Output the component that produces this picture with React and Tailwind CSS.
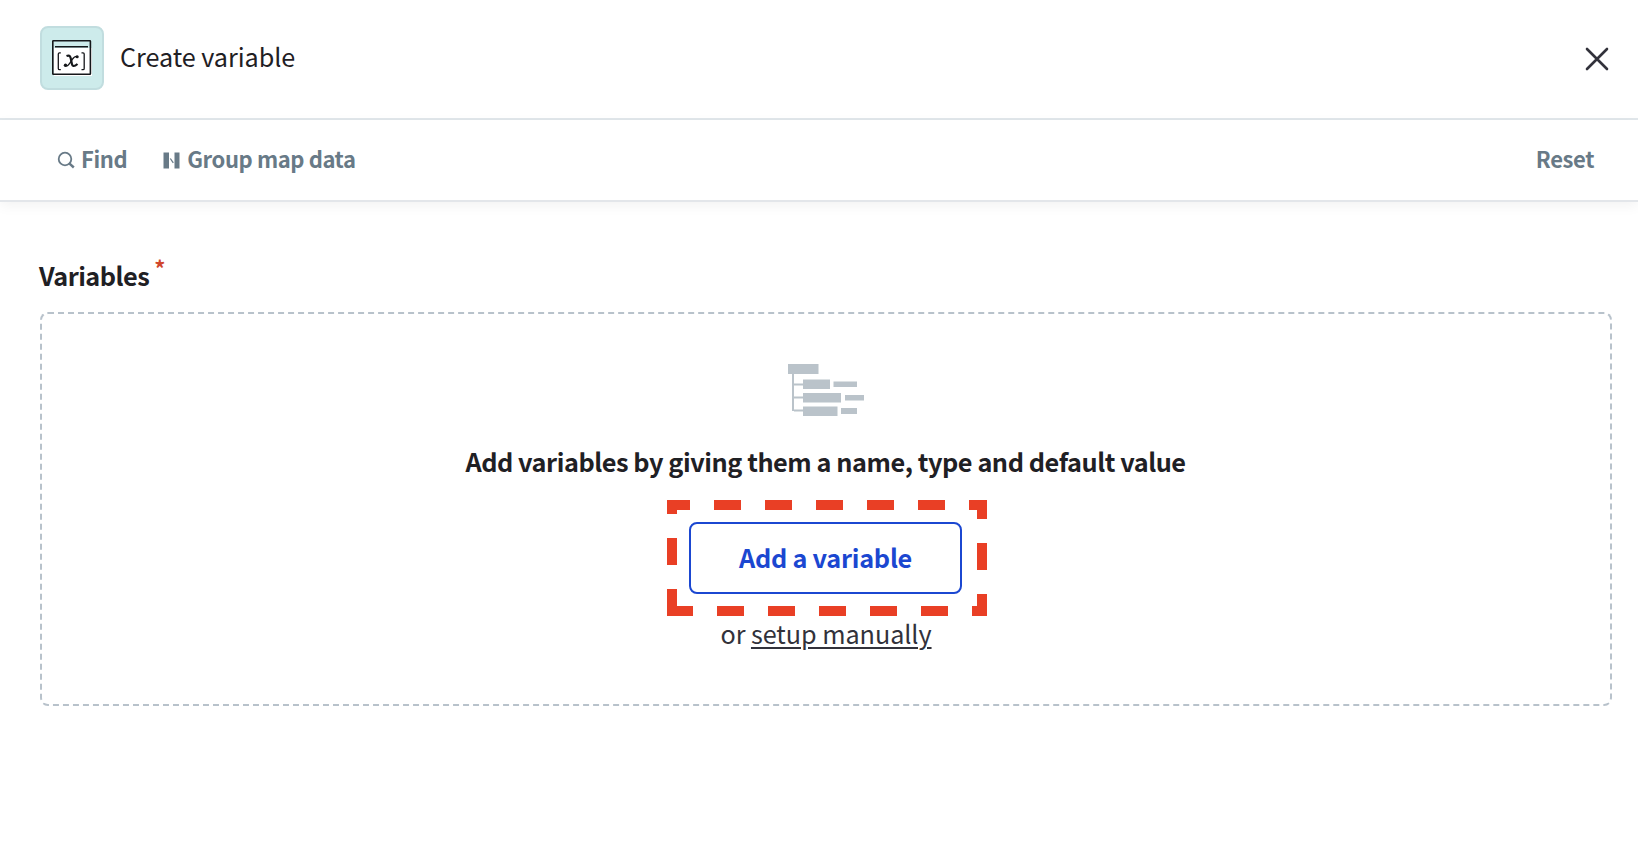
export default function App() {
  return (
    <div className="flex h-[858px] w-full flex-col overflow-hidden bg-white font-['Noto_Sans_CJK_SC',sans-serif] text-[#1f2024]">
      <header className="flex h-[120px] shrink-0 items-center justify-between border-b-2 border-[#e1e7eb] pr-7 pb-0.5 pl-10">
        <div className="flex items-center gap-4">
          <div className="flex size-16 items-center justify-center rounded-lg border-2 border-[#c1dddf] bg-[#cdebeb]">
            <svg className="-ml-px" width="40" height="36" viewBox="0 0 40 36" fill="none">
              <path d="M2 8H40V36H2Z" fill="#fff" />
              <rect x="0.8" y="0.8" width="37.6" height="33.4" rx="0.5" stroke="#15171a" strokeWidth="1.6" />
              <path d="M3 6.700H36" stroke="#15171a" strokeWidth="1.5" />
              <path d="M8.800 12.800H7.500Q6.300 12.800 6.300 14V28.500Q6.300 29.700 7.500 29.700H8.800M29.500 12.800H31Q32.200 12.800 32.200 14V28.500Q32.200 29.700 31 29.700H29.500" stroke="#15171a" strokeWidth="1.3" />
              <path d="M14.500 16C18 14.500 18.700 17 19.300 21C20 26.500 21.500 27.500 25.500 24" stroke="#15171a" strokeWidth="2.2" />
              <path d="M25.500 16.500C22 15.500 21 18.500 19.300 21C17 24.500 15.500 27 12.500 25.500" stroke="#15171a" strokeWidth="1.3" />
              <circle cx="25.200" cy="16.700" r="1.500" fill="#15171a" />
              <circle cx="13.500" cy="25.300" r="1.700" fill="#15171a" />
            </svg>
          </div>
          <h1 className="pb-1 text-[25.2px] leading-8 tracking-[-0.05px] whitespace-nowrap">Create variable</h1>
        </div>
        <svg className="mt-px" width="26" height="26" viewBox="0 0 26 26" stroke="#32323b" strokeWidth="2.6" strokeLinecap="round">
          <path d="M3 3L23 23M23 3L3 23" />
        </svg>
      </header>
      <nav className="flex h-[82px] shrink-0 items-center justify-between border-b-2 border-[#e3e6ea] pr-11 pl-[57px] text-[22px] font-bold tracking-[-0.4px] text-[#687a87] shadow-[0_4px_12px_rgba(0,0,0,0.05)]">
        <div className="flex items-center gap-9">
          <div className="flex items-center gap-1.5">
            <svg width="18" height="18" viewBox="0 0 18 18" fill="none" stroke="#687a87" strokeWidth="1.8">
              <circle cx="8" cy="8" r="6.300" />
              <path d="M12.300 12.300L16.800 16.500" strokeWidth="2.4" />
            </svg>
            <span className="pb-[3px]">Find</span>
          </div>
          <div className="flex items-center gap-[7px]">
            <svg width="17" height="17" viewBox="0 0 17 17" fill="#687a87">
              <path d="M0.500 0.500H6V16.500H0.500ZM11.500 0.500H16.500V16.500H11.500Z" />
              <path d="M7.300 6.500L10.300 10.800" stroke="#687a87" strokeWidth="1.3" />
            </svg>
            <span className="pb-[3px]">Group map data</span>
          </div>
        </div>
        <span className="pb-[3px]">Reset</span>
      </nav>
      <main className="pt-14 pr-[26px] pl-10">
        <div className="-ml-px flex h-[54px] items-start gap-[5px]">
          <h2 className="text-[25.3px] leading-[34px] font-bold tracking-[-0.52px]">Variables</h2>
          <span className="-mt-px text-[22px] leading-[20px] font-bold text-[#d0462c]">*</span>
        </div>
        <section className="flex h-[394px] flex-col items-center rounded-lg border-2 border-dashed border-[#b8c2cb] pt-[50px]">
          <svg width="76" height="52" viewBox="0 0 76 52" fill="#bac3ca">
            <path d="M0 0H30.500V10H0ZM4 10H6V47H4ZM6 19.500H15V21.500H6ZM6 32.500H15V34.500H6ZM6 45.500H15V47.500H6ZM15 15.500H42V25H15ZM45.500 17.500H69V23H45.500ZM15 29H53V38.500H15ZM57 31H76V36.500H57ZM15 42.500H49.500V52H15ZM53 44H69V50H53Z" />
          </svg>
          <p className="mt-7 mr-px text-[25.3px] leading-[34px] font-bold tracking-[-0.46px] whitespace-nowrap">Add variables by giving them a name, type and default value</p>
          <div className="relative mt-11 mr-0.5">
            <button className="block h-[72px] w-[273px] rounded-lg border-2 border-[#1b47d1] pl-px text-[25.3px] font-bold tracking-[-0.27px] whitespace-nowrap text-[#1b47d1]">Add a variable</button>
            <svg className="absolute -top-[22px] -left-[22px]" width="320" height="116" viewBox="0 0 320 116" fill="none">
              <path d="M5 116V5H315V111H0" stroke="#e93f25" strokeWidth="10" strokeDasharray="27 24" />
            </svg>
          </div>
          <p className="mt-[22px] text-[25.2px] leading-[34px] tracking-[-0.05px] whitespace-nowrap text-[#32323b]">
            or <a className="underline decoration-2 underline-offset-[3px]">setup manually</a>
          </p>
        </section>
      </main>
    </div>
  );
}
